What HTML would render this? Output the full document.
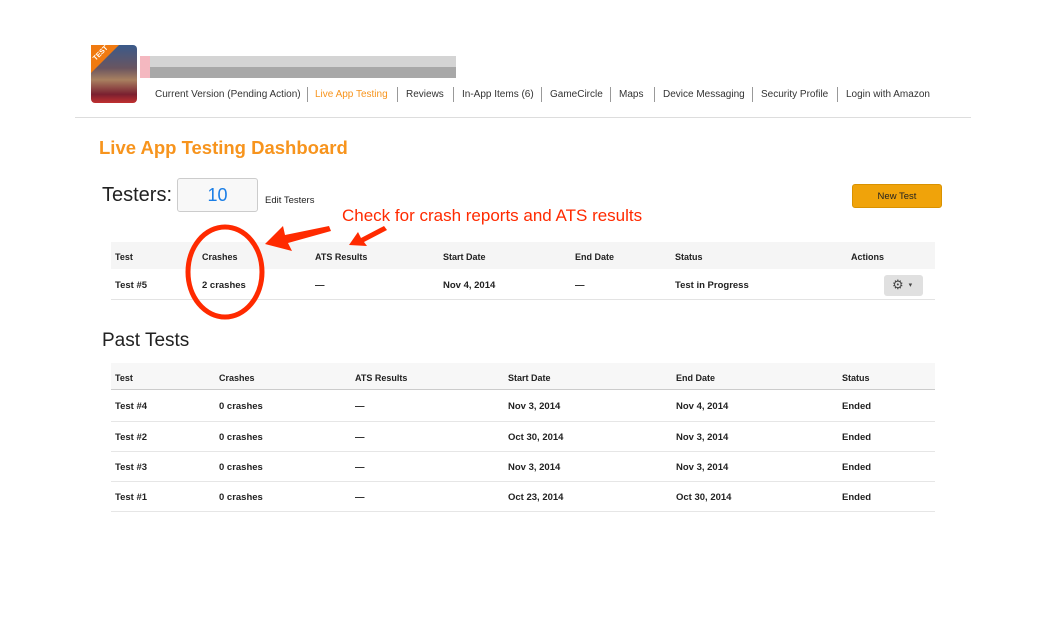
<!DOCTYPE html>
<html><head><meta charset="utf-8"><style>
*{margin:0;padding:0;box-sizing:border-box}
body{width:1054px;height:637px;background:#fff;font-family:"Liberation Sans",Arial,sans-serif;color:#222;position:relative;overflow:hidden}
.a{position:absolute;white-space:nowrap}
.nav{font-size:10px;color:#333;top:89px}
.sep{position:absolute;top:87px;width:1px;height:15px;background:#999}
.t{font-size:9px;font-weight:bold;color:#222}
.b{font-size:9.5px;font-weight:bold;color:#222}
</style></head><body>
<div class="a" style="left:91px;top:45px;width:46px;height:58px;background:linear-gradient(180deg,#3a5a8a 0%,#6a5560 40%,#a88060 60%,#7a2030 85%,#c03030 100%);border-radius:4px"></div>
<div class="a" style="left:91px;top:45px;width:0;height:0;border-top:28px solid #f07a10;border-right:28px solid transparent"></div>
<div class="a" style="left:92px;top:50px;font-size:7px;color:#fff;font-weight:bold;transform:rotate(-45deg)">TEST</div>
<div class="a" style="left:140px;top:56px;width:316px;height:11px;background:#d4d4d4"></div>
<div class="a" style="left:140px;top:67px;width:316px;height:11px;background:#a8a8a8"></div>
<div class="a" style="left:140px;top:56px;width:10px;height:22px;background:#f4b8c0"></div>

<div class="a nav" style="left:155px">Current Version (Pending Action)</div>
<div class="sep" style="left:307px"></div>
<div class="a nav" style="left:315px;color:#f7941d">Live App Testing</div>
<div class="sep" style="left:397px"></div>
<div class="a nav" style="left:406px">Reviews</div>
<div class="sep" style="left:453px"></div>
<div class="a nav" style="left:462px">In-App Items (6)</div>
<div class="sep" style="left:541px"></div>
<div class="a nav" style="left:550px">GameCircle</div>
<div class="sep" style="left:610px"></div>
<div class="a nav" style="left:619px">Maps</div>
<div class="sep" style="left:654px"></div>
<div class="a nav" style="left:663px">Device Messaging</div>
<div class="sep" style="left:752px"></div>
<div class="a nav" style="left:761px">Security Profile</div>
<div class="sep" style="left:837px"></div>
<div class="a nav" style="left:846px">Login with Amazon</div>
<div class="a" style="left:75px;top:117px;width:896px;height:1px;background:#ddd"></div>

<div class="a" style="left:99px;top:137px;font-size:18.5px;font-weight:bold;color:#f7941d">Live App Testing Dashboard</div>

<div class="a" style="left:102px;top:184px;font-size:20px;color:#222">Testers:</div>
<div class="a" style="left:177px;top:178px;width:81px;height:34px;border:1px solid #ccc;border-radius:3px;background:#f8f8f8;text-align:center;font-size:18px;line-height:32px;color:#1a7ee6">10</div>
<div class="a" style="left:265px;top:195px;font-size:9.5px">Edit Testers</div>
<div class="a" style="left:852px;top:184px;width:90px;height:24px;background:#f0a30a;border:1px solid #d99200;border-radius:3px;text-align:center;font-size:9.5px;line-height:24px;color:#222">New Test</div>

<div class="a" style="left:342px;top:206px;font-size:17px;color:#ff2a00">Check for crash reports and ATS results</div>

<div class="a" style="left:111px;top:242px;width:824px;height:27px;background:#f5f5f5"></div>
<div class="a" style="left:111px;top:299px;width:824px;height:1px;background:#e3e3e3"></div>
<div class="a t" style="left:115px;top:252px">Test</div>
<div class="a t" style="left:202px;top:252px">Crashes</div>
<div class="a t" style="left:315px;top:252px">ATS Results</div>
<div class="a t" style="left:443px;top:252px">Start Date</div>
<div class="a t" style="left:575px;top:252px">End Date</div>
<div class="a t" style="left:675px;top:252px">Status</div>
<div class="a t" style="left:851px;top:252px">Actions</div>
<div class="a b" style="left:115px;top:280px">Test #5</div>
<div class="a b" style="left:202px;top:280px">2 crashes</div>
<div class="a b" style="left:315px;top:280px">—</div>
<div class="a b" style="left:443px;top:280px">Nov 4, 2014</div>
<div class="a b" style="left:575px;top:280px">—</div>
<div class="a b" style="left:675px;top:280px">Test in Progress</div>
<div class="a" style="left:884px;top:275px;width:39px;height:21px;background:#e0e0e0;border-radius:3px;font-size:13px;line-height:20px;color:#444;padding-left:8px">⚙<span style="font-size:7px;margin-left:5px;vertical-align:2px">▾</span></div>

<div class="a" style="left:102px;top:330px;font-size:19px;color:#222">Past Tests</div>
<div class="a" style="left:111px;top:363px;width:824px;height:27px;background:#f7f7f7;border-bottom:1px solid #ccc"></div>
<div class="a t" style="left:115px;top:373px">Test</div>
<div class="a t" style="left:219px;top:373px">Crashes</div>
<div class="a t" style="left:355px;top:373px">ATS Results</div>
<div class="a t" style="left:508px;top:373px">Start Date</div>
<div class="a t" style="left:676px;top:373px">End Date</div>
<div class="a t" style="left:842px;top:373px">Status</div>

<div class="a b" style="left:115px;top:401px">Test #4</div><div class="a b" style="left:219px;top:401px">0 crashes</div><div class="a b" style="left:355px;top:401px">—</div><div class="a b" style="left:508px;top:401px">Nov 3, 2014</div><div class="a b" style="left:676px;top:401px">Nov 4, 2014</div><div class="a b" style="left:842px;top:401px">Ended</div>
<div class="a" style="left:111px;top:421px;width:824px;height:1px;background:#e6e6e6"></div>
<div class="a b" style="left:115px;top:432px">Test #2</div><div class="a b" style="left:219px;top:432px">0 crashes</div><div class="a b" style="left:355px;top:432px">—</div><div class="a b" style="left:508px;top:432px">Oct 30, 2014</div><div class="a b" style="left:676px;top:432px">Nov 3, 2014</div><div class="a b" style="left:842px;top:432px">Ended</div>
<div class="a" style="left:111px;top:451px;width:824px;height:1px;background:#e6e6e6"></div>
<div class="a b" style="left:115px;top:462px">Test #3</div><div class="a b" style="left:219px;top:462px">0 crashes</div><div class="a b" style="left:355px;top:462px">—</div><div class="a b" style="left:508px;top:462px">Nov 3, 2014</div><div class="a b" style="left:676px;top:462px">Nov 3, 2014</div><div class="a b" style="left:842px;top:462px">Ended</div>
<div class="a" style="left:111px;top:481px;width:824px;height:1px;background:#e6e6e6"></div>
<div class="a b" style="left:115px;top:492px">Test #1</div><div class="a b" style="left:219px;top:492px">0 crashes</div><div class="a b" style="left:355px;top:492px">—</div><div class="a b" style="left:508px;top:492px">Oct 23, 2014</div><div class="a b" style="left:676px;top:492px">Oct 30, 2014</div><div class="a b" style="left:842px;top:492px">Ended</div>
<div class="a" style="left:111px;top:511px;width:824px;height:1px;background:#e6e6e6"></div>

<svg class="a" style="left:0;top:0" width="1054" height="637">
<ellipse cx="225" cy="272" rx="37" ry="45" fill="none" stroke="#ff2a00" stroke-width="5"/>
<path d="M265,244 L283,226 L285,235 L329,226 L331,231 L288,243 L292,251 Z" fill="#ff2a00"/>
<path d="M349,245 L358,232 L361,238 L384,226 L387,230 L364,242 L367,246 Z" fill="#ff2a00"/>
</svg>
</body></html>
